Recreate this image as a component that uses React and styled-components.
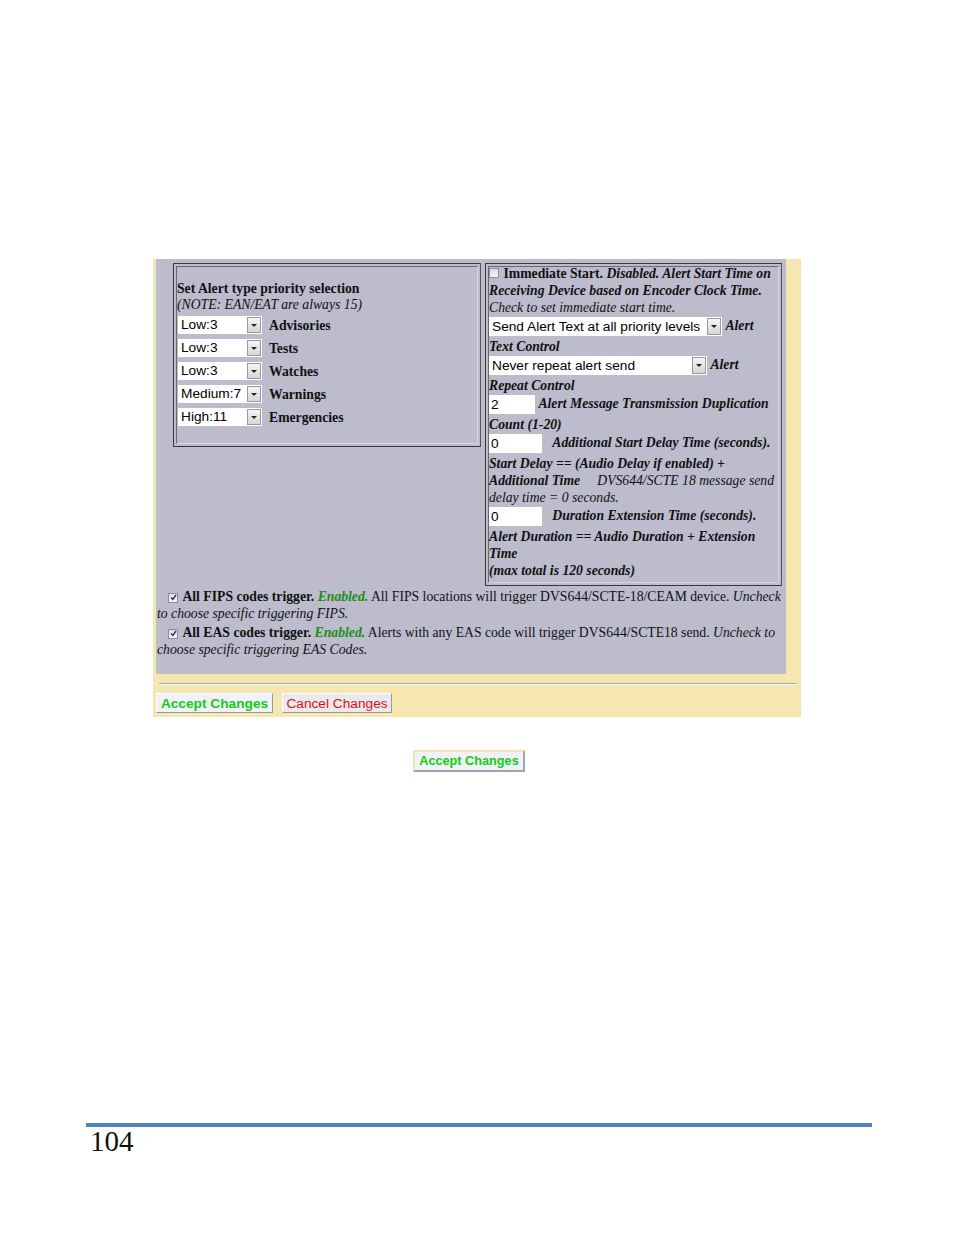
import React from "react";
import styled, { createGlobalStyle } from "styled-components";

const GlobalStyle = createGlobalStyle`
  body {
    margin: 0;
    background: #ffffff;
  }
`;

const Page = styled.div`
  width: 954px;
  height: 1235px;
  padding-top: 259px;
  box-sizing: border-box;
  display: flex;
  flex-direction: column;
  font-family: "Liberation Serif", "Times New Roman", serif;
  font-size: 13.7px;
  color: #111;
`;

const Panel = styled.div`
  margin-left: 153px;
  width: 648px;
  background: #f6e7b0;
  padding: 0 15px 4px 3px;
  box-sizing: border-box;
`;

const Inner = styled.div`
  background: #bcbccc;
  padding: 4px 0 19px 1px;
  height: 415px;
  box-sizing: border-box;
`;

const Row = styled.div`
  display: flex;
  align-items: flex-start;
  gap: 4px;
  padding-left: 16px;
`;

const Box = styled.div`
  width: ${(p) => p.w}px;
  box-sizing: border-box;
  border: 1px solid #3a3a3a;
  border-right-color: #555;
  padding: 2px;
`;

const Cell = styled.div`
  border: 1px solid #6a6a6a;
  border-bottom-color: #d8d8e0;
  border-right-color: #d8d8e0;
  line-height: ${(p) => p.lh || 17}px;
  padding: ${(p) => p.pad};
`;

const Lead = styled.div`
  margin-top: -2px;
`;

const Line = styled.div`
  display: flex;
  align-items: center;
  gap: 7px;
  margin: ${(p) => p.m || "0"};
`;

const SelectBox = styled.span`
  display: inline-flex;
  align-items: stretch;
  width: ${(p) => p.w}px;
  height: ${(p) => p.h || 19}px;
  vertical-align: middle;
  margin: 1px 0 2px;
  background: #ffffff;
  box-sizing: border-box;
  font-family: "Liberation Sans", Arial, sans-serif;
  font-size: 13.7px;
  font-style: normal;
  font-weight: normal;
  color: #000;
`;

const SelectText = styled.span`
  flex: 1;
  display: flex;
  align-items: center;
  padding-left: 3px;
  white-space: nowrap;
  overflow: hidden;
`;

const SelectArrow = styled.span`
  width: 12px;
  margin: 1px;
  background: linear-gradient(#f4f4f4, #d6d6d6);
  border: 1px solid #9a9a9a;
  display: flex;
  align-items: center;
  justify-content: center;
  &::after {
    content: "";
    border-left: 3px solid transparent;
    border-right: 3px solid transparent;
    border-top: 3px solid #222;
  }
`;

const Select = ({ w, h, value }) => (
  <SelectBox w={w} h={h}>
    <SelectText>{value}</SelectText>
    <SelectArrow />
  </SelectBox>
);

const Field = styled.span`
  display: inline-flex;
  align-items: center;
  width: ${(p) => p.w}px;
  height: 19px;
  padding-left: 2px;
  box-sizing: border-box;
  vertical-align: middle;
  margin: 1px 0 2px;
  background: #fff;
  font-family: "Liberation Sans", Arial, sans-serif;
  font-size: 13.7px;
  font-style: normal;
  font-weight: normal;
  color: #000;
`;

const CheckBox = styled.span`
  display: inline-flex;
  align-items: center;
  justify-content: center;
  width: 8px;
  height: 8px;
  border: 1px solid #8c8c9c;
  background: linear-gradient(#dcdce4, #f6f6f8);
  vertical-align: 0px;
  margin-right: 1px;
  text-indent: 0;
  svg {
    display: block;
  }
`;

const Check = ({ on }) => (
  <CheckBox>
    {on && (
      <svg width="7" height="7" viewBox="0 0 7 7">
        <path d="M1 3.5 L2.8 5.5 L6 1" fill="none" stroke="#2a2a5a" strokeWidth="1.3" />
      </svg>
    )}
  </CheckBox>
);

const B = styled.b`
  font-weight: bold;
`;

const BI = styled.span`
  font-weight: bold;
  font-style: italic;
`;

const I = styled.span`
  font-style: italic;
`;

const Green = styled.span`
  font-weight: bold;
  font-style: italic;
  color: #1c8c1c;
`;

const Para = styled.p`
  margin: ${(p) => p.m || "0"};
  line-height: 17px;
  text-indent: 11px;
`;

const Rule = styled.hr`
  margin: 9px -11px 8px 3px;
  border: none;
  border-top: 1px solid #a8a8a8;
  border-bottom: 1px solid #ffffff;
  height: 0;
`;

const Buttons = styled.div`
  display: flex;
  gap: 9px;
`;

const Button = styled.button`
  height: 20px;
  padding: 0;
  white-space: nowrap;
  font-family: "Liberation Sans", Arial, sans-serif;
  font-size: 13.7px;
  font-weight: ${(p) => (p.ok ? "bold" : "normal")};
  color: ${(p) => (p.ok ? "#11cc11" : "#e01010")};
  background: ${(p) => (p.ok ? "#f1f1f9" : "#e9e9ee")};
  border: 1px solid;
  border-color: #ffffff #9a9a9a #9a9a9a #ffffff;
  width: ${(p) => p.w}px;
  cursor: pointer;
`;

const BottomButton = styled(Button)`
  margin: 33px 0 0 413px;
  height: 22px;
  font-size: 12.7px;
  border-width: 2px;
  border-color: #f4e4ac #a4a4a4 #a4a4a4 #f4e4ac;
  align-self: flex-start;
`;

const Footer = styled.div`
  margin-left: 86px;
  margin-top: auto;
  margin-bottom: 80px;
  width: 786px;
`;

const BlueLine = styled.div`
  height: 4px;
  background: #4f81bd;
`;

const PageNum = styled.div`
  padding-left: 4px;
  font-family: "Liberation Serif", "Times New Roman", serif;
  font-size: 29px;
  line-height: 28px;
  color: #111;
`;

const priorities = [
  ["Low:3", "Advisories"],
  ["Low:3", "Tests"],
  ["Low:3", "Watches"],
  ["Medium:7", "Warnings"],
  ["High:11", "Emergencies"],
];

export default function App() {
  return (
    <>
      <GlobalStyle />
      <Page>
        <Panel>
          <Inner>
            <Row>
              <Box w={308}>
                <Cell pad="14px 2px 13px 0" lh={16}>
                  <B>Set Alert type priority selection</B>
                  <br />
                  <I>(NOTE: EAN/EAT are always 15)</I>
                  {priorities.map(([v, label], i) => (
                    <Line key={i} m="2px 0 2px 1px">
                      <Select w={84} h={18} value={v} />
                      <B>{label}</B>
                    </Line>
                  ))}
                </Cell>
              </Box>
              <Box w={297}>
                <Cell pad="0 0 3px 0">
                  <Lead>
                    <Check /> <B>Immediate Start.</B>{" "}
                    <BI>Disabled. Alert Start Time on Receiving Device based on Encoder Clock Time.</BI>
                    <br />
                    <I>Check to set immediate start time.</I>
                    <br />
                    <Select w={233} value="Send Alert Text at all priority levels" />{" "}
                    <BI>Alert Text Control</BI>
                    <br />
                    <Select w={218} value="Never repeat alert send" />{" "}
                    <BI>Alert Repeat Control</BI>
                    <br />
                    <Field w={46}>2</Field> <BI>Alert Message Transmission Duplication Count (1-20)</BI>
                    <br />
                    <Field w={53}>0</Field> &nbsp;&nbsp;
                    <BI>
                      Additional Start Delay Time (seconds). Start Delay == (Audio Delay if enabled) +
                      Additional Time
                    </BI>
                    &nbsp;&nbsp;&nbsp;&nbsp;&nbsp;
                    <I>DVS644/SCTE 18 message send delay time = 0 seconds.</I>
                    <br />
                    <Field w={53}>0</Field> &nbsp;&nbsp;<BI>Duration Extension Time (seconds).</BI>
                    <br />
                    <BI>Alert Duration == Audio Duration + Extension Time</BI>
                    <br />
                    <BI>(max total is 120 seconds)</BI>
                  </Lead>
                </Cell>
              </Box>
            </Row>
            <Para m="2px 0 0">
              <Check on /> <B>All FIPS codes trigger.</B> <Green>Enabled.</Green> All FIPS locations
              will trigger DVS644/SCTE-18/CEAM device. <I>Uncheck to choose specific triggering FIPS.</I>
            </Para>
            <Para m="2px 0 0">
              <Check on /> <B>All EAS codes trigger.</B> <Green>Enabled.</Green> Alerts with any EAS
              code will trigger DVS644/SCTE18 send. <I>Uncheck to choose specific triggering EAS Codes.</I>
            </Para>
          </Inner>
          <Rule />
          <Buttons>
            <Button ok w={117}>Accept Changes</Button>
            <Button w={110}>Cancel Changes</Button>
          </Buttons>
        </Panel>
        <BottomButton ok w={112}>Accept Changes</BottomButton>
        <Footer>
          <BlueLine />
          <PageNum>104</PageNum>
        </Footer>
      </Page>
    </>
  );
}
